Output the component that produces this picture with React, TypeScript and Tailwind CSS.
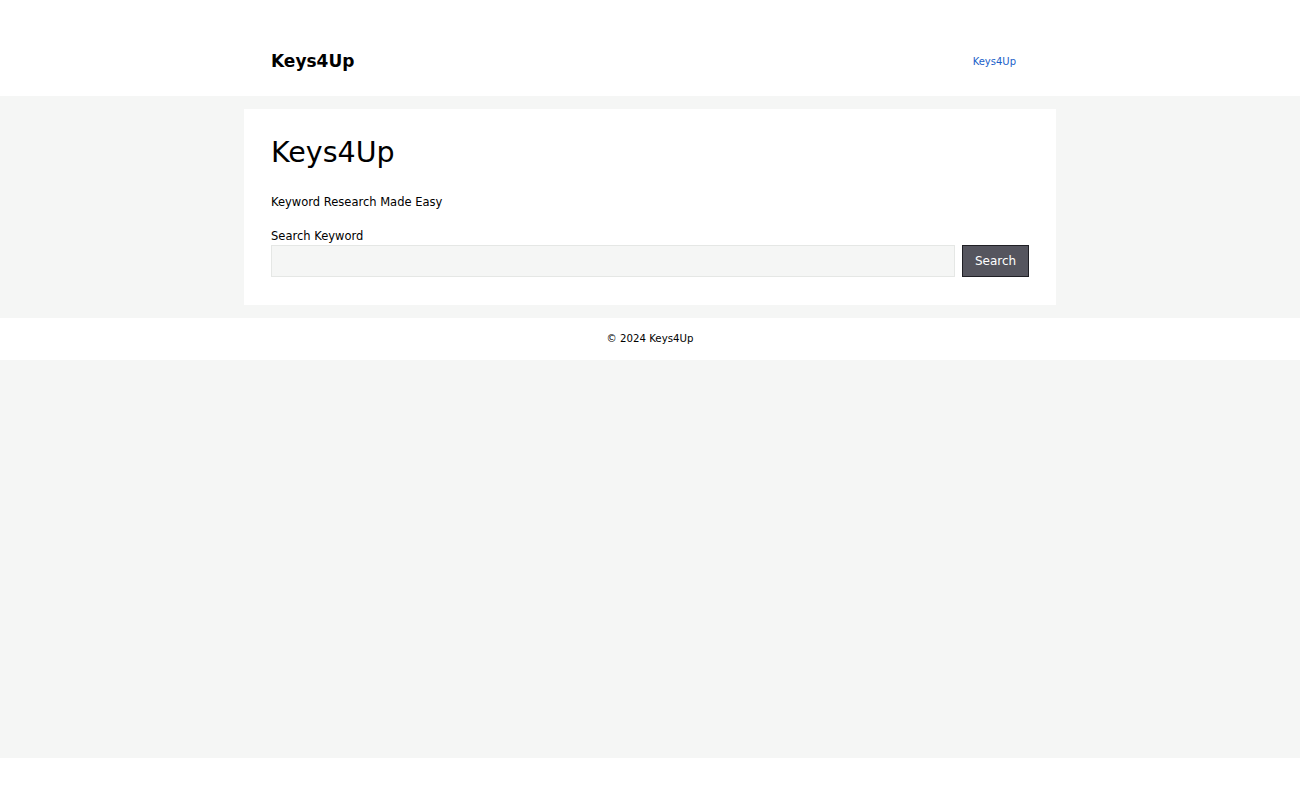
export default function App() {
    return (
        <div className="min-h-[788px] bg-white text-black" style={{ fontFamily: '"DejaVu Sans", sans-serif' }}>
            {/* Header */}
            <header className="h-[96px] bg-white">
                <div className="mx-auto flex h-full w-[812px] items-center justify-between pl-[27px] pr-[40px] pt-[26px]">
                    <div className="text-[17px] font-bold leading-none">Keys4Up</div>
                    <a href="#" className="pt-[2px] text-[10px] leading-none text-[#1b5fc9]">Keys4Up</a>
                </div>
            </header>

            {/* Main */}
            <main className="bg-[#f5f6f5] py-[13px]">
                <div className="mx-auto w-[812px] bg-white px-[27px] pt-[27px] pb-[28px]">
                    <h1 className="text-[28.5px] font-normal leading-[34px]">Keys4Up</h1>
                    <p className="mt-[24px] text-[11.5px] leading-[16px]">Keyword Research Made Easy</p>
                    <form className="mt-[18px]" onSubmit={(e) => e.preventDefault()}>
                        <label className="block text-[11.5px] leading-[16px]">Search Keyword</label>
                        <div className="mt-[1px] flex gap-[7px]">
                            <input
                                type="text"
                                className="h-[32px] flex-1 border border-[#e5e7e5] bg-[#f5f6f5] px-2 text-[13px] outline-none"
                            />
                            <button
                                type="submit"
                                className="h-[32px] w-[67px] border border-[#1f1f24] bg-[#55555e] text-[12px] text-white"
                            >
                                Search
                            </button>
                        </div>
                    </form>
                </div>
            </main>

            {/* Footer */}
            <footer className="flex h-[42px] items-center justify-center bg-white text-[10.2px]">
                © 2024 Keys4Up
            </footer>

            <div className="h-[398px] bg-[#f5f6f5]" />
        </div>
    )
}
